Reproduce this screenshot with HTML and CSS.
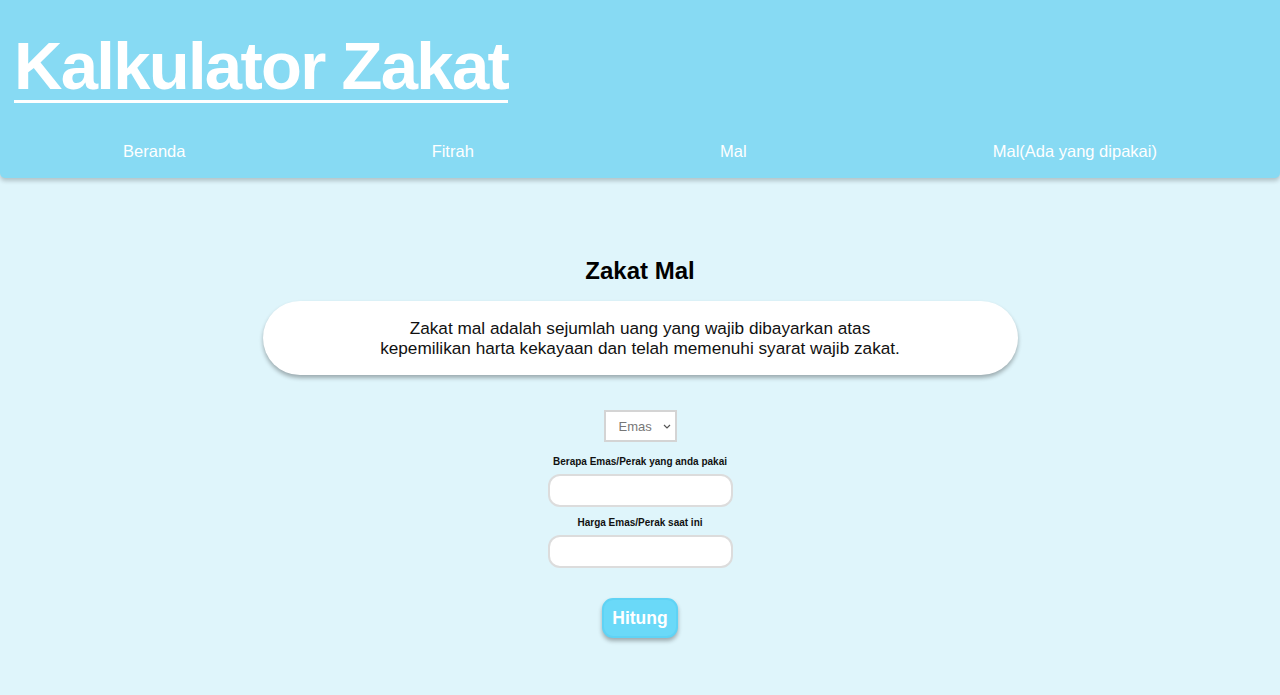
FILE: index.html
```html
<!DOCTYPE html>
<html lang="id">
<head>
<meta charset="utf-8">
<title>Kalkulator Zakat</title>
<link rel="stylesheet" href="styles.css">
</head>
<body>
<header class="header">
  <h1 class="title">Kalkulator Zakat</h1>
  <nav class="nav">
    <a class="nav-link" href="#">Beranda</a>
    <a class="nav-link" href="#">Fitrah</a>
    <a class="nav-link" href="#">Mal</a>
    <a class="nav-link" href="#">Mal(Ada yang dipakai)</a>
  </nav>
</header>
<main class="main">
  <h2 class="heading">Zakat Mal</h2>
  <div class="desc">Zakat mal adalah sejumlah uang yang wajib dibayarkan atas<br>kepemilikan harta kekayaan dan telah memenuhi syarat wajib zakat.</div>
  <form class="form">
    <span class="select-wrap">
      <select class="select">
        <option>Emas</option>
        <option>Perak</option>
      </select>
      <svg class="chevron" width="8" height="5" viewBox="0 0 8 5"><path d="M1 1l3 3 3-3" fill="none" stroke="#555" stroke-width="1.2"/></svg>
    </span>
    <label class="label">Berapa Emas/Perak yang anda pakai</label>
    <input class="input" type="text">
    <label class="label">Harga Emas/Perak saat ini</label>
    <input class="input" type="text">
    <button class="button" type="button">Hitung</button>
  </form>
</main>
</body>
</html>
```
FILE: styles.css
```css
html, body {
  margin: 0;
  padding: 0;
}
body {
  background: #dff5fb;
  font-family: "Liberation Sans", Arial, sans-serif;
  min-height: 695px;
}
.header {
  background: #87daf3;
  border-radius: 0 0 5px 5px;
  box-shadow: 0 3px 4px rgba(0, 0, 0, 0.2);
  height: 178px;
  padding: 0 14px;
  box-sizing: border-box;
  display: flex;
  flex-direction: column;
}
.title {
  margin: 0;
  padding-top: 32px;
  font-size: 67px;
  font-weight: bold;
  letter-spacing: -1.7px;
  color: #fff;
  line-height: 68px;
  align-self: flex-start;
  border-bottom: 3px solid #fff;
}
.nav {
  display: flex;
  justify-content: space-around;
  margin: 39px -14px 0;
}
.nav-link {
  color: #fff;
  text-decoration: none;
  font-size: 16.5px;
}
.main {
  display: flex;
  flex-direction: column;
  align-items: center;
  padding-top: 80px;
}
.heading {
  margin: 0;
  font-size: 24px;
  font-weight: bold;
  color: #000;
  line-height: 26px;
}
.desc {
  margin-top: 17px;
  width: 755px;
  height: 74px;
  box-sizing: border-box;
  background: #fff;
  border-radius: 37px;
  box-shadow: 0 3px 4px rgba(0, 0, 0, 0.3);
  display: flex;
  align-items: center;
  justify-content: center;
  text-align: center;
  font-size: 17.2px;
  line-height: 20px;
  color: #111;
}
.form {
  display: flex;
  flex-direction: column;
  align-items: center;
  margin-top: 35px;
}
.select-wrap {
  position: relative;
  display: block;
  height: 32px;
}
.select {
  appearance: none;
  -webkit-appearance: none;
  width: 73px;
  height: 32px;
  border: 2px solid #d4d4d4;
  background: #fff;
  color: #777;
  font-family: "Liberation Sans", Arial, sans-serif;
  font-size: 13px;
  padding: 0 0 0 13px;
  border-radius: 0;
  display: block;
}
.chevron {
  position: absolute;
  right: 6px;
  top: 14px;
  pointer-events: none;
}
.label {
  margin-top: 14px;
  font-size: 10px;
  font-weight: bold;
  color: #111;
  line-height: 12px;
}
.input {
  margin-top: 6px;
  width: 185px;
  height: 33px;
  box-sizing: border-box;
  border: 2px solid #dcdcdc;
  border-radius: 12px;
  background: #fff;
}
.input + .label {
  margin-top: 10px;
}
.button {
  margin-top: 30px;
  width: 76px;
  height: 40px;
  background: #6ad9f8;
  border: 2px solid #5fd3f5;
  border-radius: 11px;
  color: #fff;
  font-family: "Liberation Sans", Arial, sans-serif;
  font-size: 17.5px;
  font-weight: bold;
  box-shadow: 0 3px 4px rgba(0, 0, 0, 0.3);
}
```
